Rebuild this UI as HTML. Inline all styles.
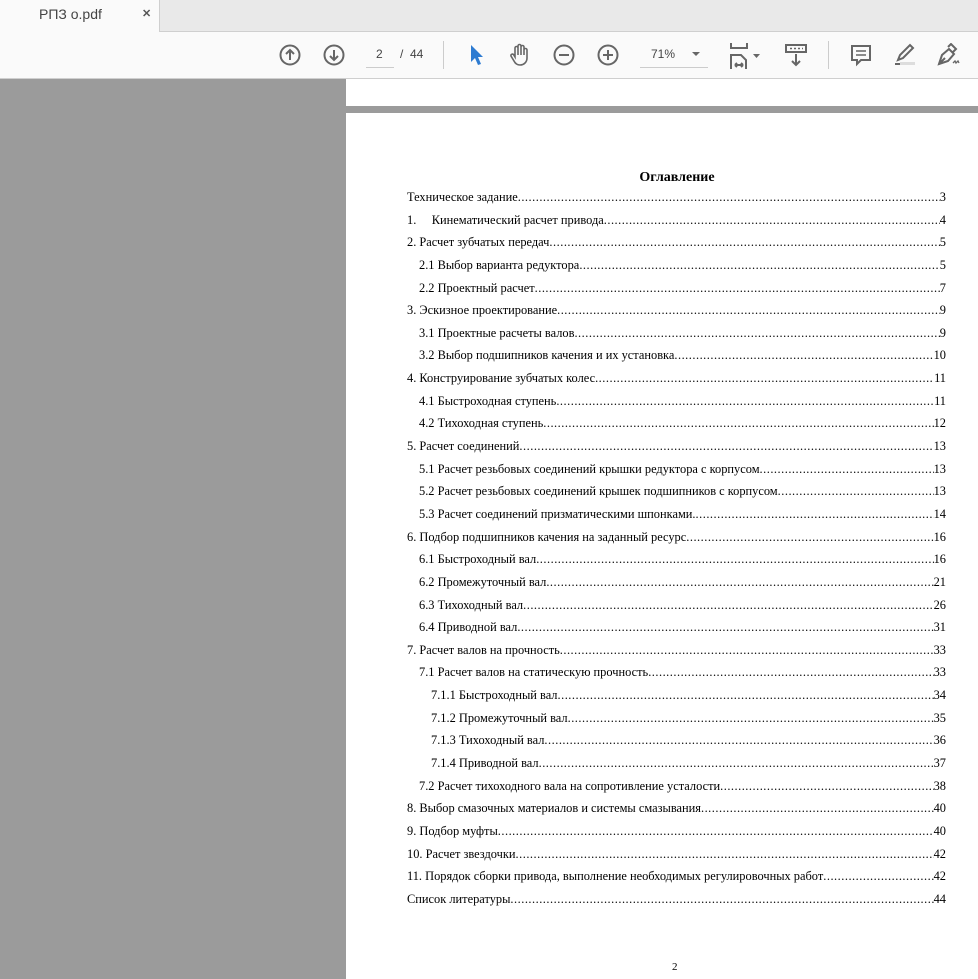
<!DOCTYPE html>
<html><head><meta charset="utf-8"><style>
*{margin:0;padding:0;box-sizing:border-box}
body{width:978px;height:979px;overflow:hidden;background:#9b9b9b;font-family:"Liberation Sans",sans-serif;position:relative}
.tabbar{position:absolute;left:0;top:0;width:978px;height:32px;background:#e9e9e9;border-bottom:1px solid #cfcfcf}
.tab{position:absolute;left:0;top:0;width:160px;height:32px;background:#fafafa;border-right:1px solid #cfcfcf}
.tab span{position:absolute;left:39px;top:6px;font-size:14px;color:#444}
.tab b{position:absolute;left:142px;top:7px;font-size:11px;color:#555}
.tool{position:absolute;left:0;top:32px;width:978px;height:47px;background:#fafafa;border-bottom:1px solid #cfcfcf}
svg{position:absolute}
.pg{position:absolute;font-size:12px;color:#444}
.page1{position:absolute;left:346px;top:79px;width:632px;height:27px;background:#fff}
.page2{position:absolute;left:346px;top:113px;width:632px;height:866px;background:#fff}
.toc{position:absolute;left:407px;top:186px;width:539px;font-family:"Liberation Serif",serif;font-size:12.4px;color:#000}
.r{display:flex;height:22.65px;line-height:22.65px;white-space:nowrap}
.r .t{flex:none}
.r .d{flex:1;overflow:hidden;letter-spacing:0.5px}
.r .d:after{content:"........................................................................................................................................................................................................................................................................"}
.r .n{flex:none}
h1{position:absolute;left:346px;top:170px;width:662px;text-align:center;font-family:"Liberation Serif",serif;font-size:14px;font-weight:bold}
</style></head><body>
<div class="tabbar"><div class="tab"><span>РПЗ o.pdf</span><b>✕</b></div></div>
<div class="tool">
<svg style="left:279px;top:12px" width="22" height="22" viewBox="0 0 22 22" fill="none" stroke="#666" stroke-width="2"><circle cx="11" cy="11" r="9.5"/><path d="M11 16V6M7 10l4-4 4 4"/></svg>
<svg style="left:323px;top:12px" width="22" height="22" viewBox="0 0 22 22" fill="none" stroke="#666" stroke-width="2"><circle cx="11" cy="11" r="9.5"/><path d="M11 6v10M7 12l4 4 4-4"/></svg>
<div class="pg" style="left:376px;top:15px">2</div>
<div style="position:absolute;left:366px;top:35px;width:28px;border-top:1px solid #ccc"></div>
<div class="pg" style="left:400px;top:15px">/&nbsp; 44</div>
<div style="position:absolute;left:443px;top:9px;height:28px;border-left:1px solid #ccc"></div>
<svg style="left:470px;top:12px" width="14" height="22" viewBox="0 0 14 22"><path d="M1 1v17l4-4 3 7 3-1-3-7h5z" fill="#2d7bd1"/></svg>
<svg style="left:508px;top:11px" width="24" height="24" viewBox="0 0 24 24" fill="none" stroke="#666" stroke-width="1.6"><path d="M7 14V5a1.5 1.5 0 013 0v7V3a1.5 1.5 0 013 0v9V4a1.5 1.5 0 013 0v8V7a1.5 1.5 0 013 0v8c0 4-3 7-7 7-3 0-5-2-6-4l-3-5a1.5 1.5 0 012.5-1.5z"/></svg>
<svg style="left:553px;top:12px" width="22" height="22" viewBox="0 0 22 22" fill="none" stroke="#666" stroke-width="2"><circle cx="11" cy="11" r="9.5"/><path d="M6 11h10"/></svg>
<svg style="left:597px;top:12px" width="22" height="22" viewBox="0 0 22 22" fill="none" stroke="#666" stroke-width="2"><circle cx="11" cy="11" r="9.5"/><path d="M6 11h10M11 6v10"/></svg>
<div class="pg" style="left:651px;top:15px">71%</div>
<div style="position:absolute;left:640px;top:35px;width:68px;border-top:1px solid #ccc"></div>
<svg style="left:692px;top:20px" width="8" height="5"><path d="M0 0h8L4 4z" fill="#666"/></svg>
<svg style="left:729px;top:10px" width="36" height="28" viewBox="0 0 36 28" fill="none" stroke="#666" stroke-width="2"><path d="M2 1v5h16V1M2 27V13h10l5 5v9M6 23h8M6 23l2-2M6 23l2 2M14 23l-2-2M14 23l-2 2"/><path d="M24 12h7l-3.5 4z" fill="#666" stroke="none"/></svg>
<svg style="left:784px;top:11px" width="24" height="24" viewBox="0 0 24 24" fill="none" stroke="#666" stroke-width="2"><rect x="2" y="2" width="20" height="7"/><path d="M12 11v11M8 18l4 4 4-4"/><path d="M6 5.5h2M10 5.5h2M14 5.5h2M18 5.5h1" stroke-width="1.5"/></svg>
<div style="position:absolute;left:828px;top:9px;height:28px;border-left:1px solid #ccc"></div>
<svg style="left:850px;top:12px" width="22" height="24" viewBox="0 0 22 24" fill="none" stroke="#666" stroke-width="2"><path d="M2 2h18v14h-9l-4 4v-4H2z"/><path d="M6 7h10M6 11h10" stroke-width="1.5"/></svg>
<svg style="left:892px;top:11px" width="24" height="24" viewBox="0 0 24 24" fill="none" stroke="#666" stroke-width="2"><path d="M6 17l2-5L18 2l3 3-10 10z"/><path d="M3 21h5"/><rect x="8" y="19" width="15" height="3" fill="#ddd" stroke="none"/></svg>
<svg style="left:936px;top:11px" width="26" height="24" viewBox="0 0 26 24" fill="none" stroke="#666" stroke-width="2"><path d="M3 21l3-9 7-6 5 5-6 7zM3 21l6-6M12 4l3-3 5 5-3 3"/><path d="M17 20l2-2 1 2 2-2 1 2" stroke-width="1.3"/></svg>
</div>
<div class="page1"></div>
<div class="page2"></div>
<h1>Оглавление</h1>
<div class="toc">
<div class="r"><span class="t">Техническое задание</span><span class="d"></span><span class="n">3</span></div>
<div class="r"><span class="t">1.&nbsp;&nbsp;&nbsp;&nbsp;&nbsp;Кинематический расчет привода</span><span class="d"></span><span class="n">4</span></div>
<div class="r"><span class="t">2. Расчет зубчатых передач </span><span class="d"></span><span class="n">5</span></div>
<div class="r" style="padding-left:12px"><span class="t">2.1 Выбор варианта редуктора </span><span class="d"></span><span class="n">5</span></div>
<div class="r" style="padding-left:12px"><span class="t">2.2 Проектный расчет</span><span class="d"></span><span class="n">7</span></div>
<div class="r"><span class="t">3. Эскизное проектирование </span><span class="d"></span><span class="n">9</span></div>
<div class="r" style="padding-left:12px"><span class="t">3.1 Проектные расчеты валов</span><span class="d"></span><span class="n">9</span></div>
<div class="r" style="padding-left:12px"><span class="t">3.2 Выбор подшипников качения и их установка </span><span class="d"></span><span class="n">10</span></div>
<div class="r"><span class="t">4. Конструирование зубчатых колес </span><span class="d"></span><span class="n">11</span></div>
<div class="r" style="padding-left:12px"><span class="t">4.1 Быстроходная ступень </span><span class="d"></span><span class="n">11</span></div>
<div class="r" style="padding-left:12px"><span class="t">4.2 Тихоходная ступень </span><span class="d"></span><span class="n">12</span></div>
<div class="r"><span class="t">5. Расчет соединений </span><span class="d"></span><span class="n">13</span></div>
<div class="r" style="padding-left:12px"><span class="t">5.1 Расчет резьбовых соединений крышки редуктора с корпусом</span><span class="d"></span><span class="n">13</span></div>
<div class="r" style="padding-left:12px"><span class="t">5.2 Расчет резьбовых соединений крышек подшипников с корпусом</span><span class="d"></span><span class="n">13</span></div>
<div class="r" style="padding-left:12px"><span class="t">5.3 Расчет соединений призматическими шпонками. </span><span class="d"></span><span class="n">14</span></div>
<div class="r"><span class="t">6. Подбор подшипников качения на заданный ресурс</span><span class="d"></span><span class="n">16</span></div>
<div class="r" style="padding-left:12px"><span class="t">6.1 Быстроходный вал</span><span class="d"></span><span class="n">16</span></div>
<div class="r" style="padding-left:12px"><span class="t">6.2 Промежуточный вал</span><span class="d"></span><span class="n">21</span></div>
<div class="r" style="padding-left:12px"><span class="t">6.3 Тихоходный вал</span><span class="d"></span><span class="n">26</span></div>
<div class="r" style="padding-left:12px"><span class="t">6.4 Приводной вал </span><span class="d"></span><span class="n">31</span></div>
<div class="r"><span class="t">7. Расчет валов на прочность </span><span class="d"></span><span class="n">33</span></div>
<div class="r" style="padding-left:12px"><span class="t">7.1 Расчет валов на статическую прочность </span><span class="d"></span><span class="n">33</span></div>
<div class="r" style="padding-left:24px"><span class="t">7.1.1 Быстроходный вал </span><span class="d"></span><span class="n">34</span></div>
<div class="r" style="padding-left:24px"><span class="t">7.1.2 Промежуточный вал</span><span class="d"></span><span class="n">35</span></div>
<div class="r" style="padding-left:24px"><span class="t">7.1.3 Тихоходный вал </span><span class="d"></span><span class="n">36</span></div>
<div class="r" style="padding-left:24px"><span class="t">7.1.4 Приводной вал </span><span class="d"></span><span class="n">37</span></div>
<div class="r" style="padding-left:12px"><span class="t">7.2 Расчет тихоходного вала на сопротивление усталости </span><span class="d"></span><span class="n">38</span></div>
<div class="r"><span class="t">8. Выбор смазочных материалов и системы смазывания </span><span class="d"></span><span class="n">40</span></div>
<div class="r"><span class="t">9. Подбор муфты </span><span class="d"></span><span class="n">40</span></div>
<div class="r"><span class="t">10. Расчет звездочки </span><span class="d"></span><span class="n">42</span></div>
<div class="r"><span class="t">11. Порядок сборки привода, выполнение необходимых регулировочных работ </span><span class="d"></span><span class="n">42</span></div>
<div class="r"><span class="t">Список литературы </span><span class="d"></span><span class="n">44</span></div>
</div>
<div style="position:absolute;left:672px;top:961px;font-family:'Liberation Serif',serif;font-size:11px">2</div>
</body></html>
